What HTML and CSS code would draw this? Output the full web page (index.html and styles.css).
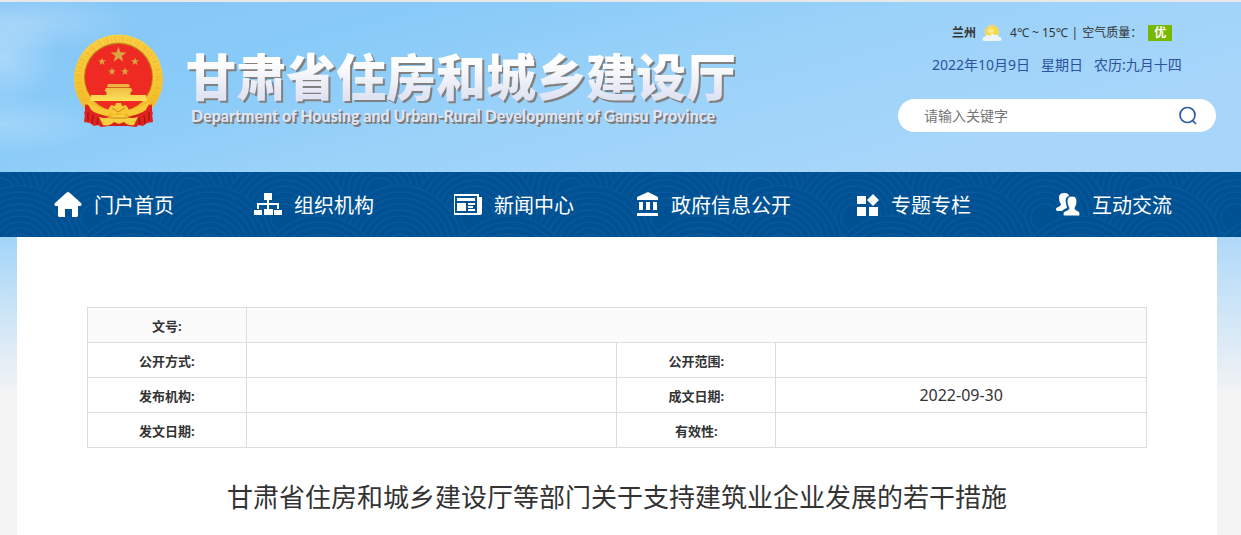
FILE: index.html
```html
<!DOCTYPE html>
<html lang="zh-CN">
<head>
  <meta charset="UTF-8">
  <meta name="viewport" content="width=device-width,initial-scale=1">
  <title>甘肃省住房和城乡建设厅</title>
  <link rel="stylesheet" href="styles.css">
</head>
<body>

  <header class="header">
    <div class="container header-inner">
      <a class="brand" href="#">
        <svg class="emblem" viewBox="0 0 100 104" aria-hidden="true">
          <defs>
            <linearGradient id="gold" x1="0" y1="0" x2="0" y2="1">
              <stop offset="0" stop-color="#fbd044"/>
              <stop offset=".6" stop-color="#f6c430"/>
              <stop offset="1" stop-color="#f2b524"/>
            </linearGradient>
            <linearGradient id="gate" x1="0" y1="0" x2="0" y2="1">
              <stop offset="0" stop-color="#e9b23a"/>
              <stop offset="1" stop-color="#ffe25a"/>
            </linearGradient>
            <path id="star" d="M0-10 2.3-3.2 9.5-3.1 3.8 1.2 5.9 8.1 0 4-5.9 8.1-3.8 1.2-9.5-3.1-2.3-3.2Z"/>
          </defs>
          <circle cx="48.500" cy="49" r="44.500" fill="url(#gold)"/>
          <circle cx="48.500" cy="49" r="40" fill="none" stroke="#e0a126" stroke-width="6" stroke-dasharray="2 3 1 2" opacity=".25"/>
          <circle cx="48.500" cy="47" r="34.500" fill="#c27f1c"/>
          <circle cx="48.500" cy="47.500" r="33.500" fill="#ee2a22"/>
          <g fill="#d9a441">
            <use href="#star" transform="translate(48.500 25) scale(.84)"/>
            <use href="#star" transform="translate(32 31.500) scale(.42)"/>
            <use href="#star" transform="translate(65 31.500) scale(.42)"/>
            <use href="#star" transform="translate(42 41.500) scale(.42)"/>
            <use href="#star" transform="translate(55 41.500) scale(.42)"/>
          </g>
          <path d="M38 54h21l1 3h-23zM36 58h25l1.500 3-2 1v3h15.500l1 6h-57l1-6h15.500v-3l-2-1z" fill="url(#gate)"/>
          <path d="M38 57.500h21" stroke="#c98520" stroke-width=".6"/>
          <path d="M17 74c8 9 20 14 31.500 14s23.500-5 31.500-14l3 10-16 10H30L14 84z" fill="#d9201c"/>
          <path d="M17 71c7 5 13 8 21 9l3-5 4 1 1-3h5l1 3 4-1 3 5c8-1 14-4 21-9l-4 9c-6 4-12 6-17 5l-3-2-3 2-2-2h-5l-2 2-3-2-3 2c-6 0-12-1-17-5z" fill="#f8c936"/>
          <path d="M15 74l8 8 9 5 7 9-8 1-3-2-4 1-4-3-6-1 1-9zM82 74l-8 8-9 5-7 9 8 1 3-2 4 1 4-3 6-1-1-9z" fill="#e1231e"/>
          <path d="M18 82v9m5-6-1 9m6-6-1 7M79 82v9m-5-6 1 9m-6-6 1 7" stroke="#9e1513" stroke-width="1.200" fill="none"/>
          <path d="M38 90h21l3 6H35z" fill="#d9201c"/>
          <path d="M29 87c6 2 11 1 15-2h9c4 3 9 4 15 2l-4 8c-5 1-8-1-10-3l-5 2-5-2c-3 3-6 4-11 3z" fill="#f8cf3e"/>
          <path d="M42 78l6 4 7-4M40 88h17" stroke="#c98520" fill="none"/>
        </svg>
        <span class="brand-text">
          <strong class="brand-cn">甘肃省住房和城乡建设厅</strong>
          <span class="brand-en">Department of Housing and Urban-Rural Development of Gansu Province</span>
        </span>
      </a>

      <div class="tools">
        <div class="weather">
          <b class="city">兰州</b>
          <svg class="weather-icon" width="20" height="18" viewBox="0 0 20 18" aria-hidden="true">
            <circle cx="10" cy="8" r="7.500" fill="#f7d86b" opacity=".75"/>
            <circle cx="10" cy="8" r="5.500" fill="#fbd53a"/>
            <circle cx="9" cy="7" r="3" fill="#fdeb8a"/>
            <path d="M2 17a2 2 0 0 1 1-4 3 3 0 0 1 5-1 3 3 0 0 1 5-1 3 3 0 0 1 4 2 2 2 0 0 1 1 4z" fill="#eef5fb"/>
          </svg>
          <span class="forecast"><span>4℃ ~ 15℃</span><span>|</span><span>空气质量：</span></span>
          <b class="air">优</b>
        </div>
        <div class="date"><span>2022年10月9日</span><span>星期日</span><span>农历:九月十四</span></div>
        <form class="search">
          <input type="text" placeholder="请输入关键字" aria-label="请输入关键字">
          <button type="submit" aria-label="搜索">
            <svg width="20" height="20" viewBox="0 0 20 20" fill="none" stroke="#2c5ba5" stroke-width="1.700">
              <circle cx="9.500" cy="9" r="7.500"/>
              <path d="M14.500 14.500l3.500 3.500"/>
            </svg>
          </button>
        </form>
      </div>
    </div>
  </header>

  <nav class="nav">
    <svg class="nav-pattern" aria-hidden="true">
      <defs>
        <g id="wave" fill="#005193" stroke="#07589a" stroke-width="1.500">
          <circle r="62"/><circle r="56"/><circle r="50"/><circle r="44"/><circle r="38"/>
          <circle r="32"/><circle r="26"/><circle r="20"/><circle r="14"/>
        </g>
        <pattern id="waves" width="190" height="80" patternUnits="userSpaceOnUse">
          <use href="#wave" x="0" y="20"/><use href="#wave" x="190" y="20"/>
          <use href="#wave" x="95" y="46"/>
          <use href="#wave" x="20" y="76"/><use href="#wave" x="210" y="76"/>
          <use href="#wave" x="130" y="106"/>
        </pattern>
      </defs>
      <rect width="100%" height="100%" fill="url(#waves)"/>
    </svg>
    <ul class="container nav-list">
      <li><a href="#">
        <svg width="28" height="26" viewBox="0 0 28 26"><path d="M14 0c1 0 2 1 3 2l10 9c1 1 1 3-1 3h-2v9c0 2-1 2-2 2h-4v-8h-7v8H6c-1 0-2 0-2-2v-9H2c-2 0-2-2-1-3l10-9c1-1 2-2 3-2z"/></svg>
        门户首页</a></li>
      <li><a href="#">
        <svg width="28" height="26" viewBox="0 0 28 26"><path d="M10 1h8v7h-3v3h10v6h-2v-4h-8v4h4v6h-9v-6h3v-4H5v4H3v-6h10V8h-3zM0 18h8v5H0zM20 18h8v5h-8z"/></svg>
        组织机构</a></li>
      <li><a href="#">
        <svg width="28" height="26" viewBox="0 0 28 26"><path fill-rule="evenodd" d="M0 2h25v3h3v16a2 2 0 0 1-2 2H0zM1 4v17h22V4z"/><path d="M3 6h18v3H3zM3 11h9v8H3zM14 11h7v2h-7zM14 14h5v2h-5zM14 17h7v2h-7z"/></svg>
        新闻中心</a></li>
      <li><a href="#">
        <svg width="22" height="26" viewBox="0 0 22 26"><path d="M11 0l10 5v3H0V5zM2 10h4v8H2zM9 10h4v8H9zM16 10h4v8h-4zM0 21h21v3H0z"/></svg>
        政府信息公开</a></li>
      <li><a href="#">
        <svg width="22" height="26" viewBox="0 0 22 26"><path d="M0 4h9v8H0zM16 2l6 6-6 6-6-6zM0 15h9v9H0zM12 15h9v9h-9z"/></svg>
        专题专栏</a></li>
      <li><a href="#">
        <svg width="24" height="26" viewBox="0 0 24 26"><path d="M9 1c2 0 4 1 4 3-3 1-4 4-3 7 0 2 1 3 1 5-3 1-4 2-5 3H2c-2 0-2-1-2-2 0-2 5-2 5-5-1-1-2-3-2-6 0-4 2-5 6-5z"/><path d="M16 4c4 0 5 3 5 6 0 2-1 4-2 6 0 3 5 2 5 6 0 2-1 2-2 2H10c-2 0-3 0-3-2 0-4 6-3 6-6-1-2-2-4-2-6 0-3 1-6 5-6z" stroke="#005193"/></svg>
        互动交流</a></li>
    </ul>
  </nav>

  <div class="page">
    <main class="container content">
      <table class="info">
        <colgroup>
          <col class="col-name"><col class="col-value">
          <col class="col-name"><col class="col-value">
        </colgroup>
        <tr class="first"><th scope="row">文号:</th><td colspan="3"></td></tr>
        <tr><th scope="row">公开方式:</th><td></td><th scope="row">公开范围:</th><td></td></tr>
        <tr><th scope="row">发布机构:</th><td></td><th scope="row">成文日期:</th><td>2022-09-30</td></tr>
        <tr><th scope="row">发文日期:</th><td></td><th scope="row">有效性:</th><td></td></tr>
      </table>
      <h1 class="title">甘肃省住房和城乡建设厅等部门关于支持建筑业企业发展的若干措施</h1>
    </main>
  </div>

</body>
</html>
```
FILE: styles.css
```css
*, *::before, *::after { box-sizing: border-box; }
html { background: #f4f4f4; }
body {
  margin: 0;
  min-height: 100vh;
  display: flex;
  flex-direction: column;
  border-top: 2px solid #e8e8e8;
  font-family: "Noto Sans", "Noto Sans CJK SC", sans-serif;
  font-size: 14px;
  color: #333;
  /* sky, fading to grey below the menu */
  background:
    linear-gradient(to bottom, rgba(244,244,244,0) 220px, rgba(244,244,244,.4) 290px, #f4f4f4 395px),
    radial-gradient(ellipse 110px 30px at 30px 20px, rgba(255,255,255,.22), transparent),
    radial-gradient(ellipse 60px 50px at 0 55px, rgba(255,255,255,.3), transparent),
    radial-gradient(ellipse 110px 30px at 0 122px, rgba(255,255,255,.22), transparent),
    linear-gradient(165deg, #86c6f6 0, #88caf8 120px, #9ad2f9 240px, #a8d6fa 400px);
}
a { color: inherit; text-decoration: none; }
.container {
  width: 100%;
  max-width: 1200px;
  margin: 0 auto;
}
.header, .nav, .page { padding: 0 24px 0 17px; }

/* Header */
.header-inner {
  display: flex;
  justify-content: space-between;
  align-items: flex-start;
}
.brand {
  display: flex;
  gap: 16px;
  padding: 28px 0 38px 53px;
}
.emblem { width: 100px; height: 104px; flex: none; }
.brand-text {
  display: flex;
  flex-direction: column;
  padding-top: 14px;
  font-family: "Noto Sans CJK SC", sans-serif;
  font-weight: 700;
  white-space: nowrap;
}
.brand-cn {
  font-size: 50px;
  line-height: 60px;
  color: transparent;
  background: linear-gradient(#fff 30%, #dfe3f2 90%);
  -webkit-background-clip: text;
  background-clip: text;
  filter: drop-shadow(2px 2px 0 #808080);
}
.brand-en {
  padding: 3px 0 0 5px;
  font-family: Lato, sans-serif;
  font-size: 16px;
  font-weight: 900;
  line-height: 18px;
  color: #dfe5f5;
  text-shadow: 1px 1px 0 #777, 2px 2px 0 #858585;
}
.tools {
  display: flex;
  flex-direction: column;
  width: 318px;
  margin-right: 1px;
  padding-top: 20px;
}
.weather {
  display: flex;
  align-items: center;
  gap: 8px;
  padding-left: 54px;
  font-size: 12px;
  line-height: 22px;
  white-space: nowrap;
}
.weather-icon { margin-left: -2px; }
.forecast { display: flex; gap: 4px; }
.air {
  margin-left: -2px;
  padding: 0 6px;
  line-height: 16px;
  color: #fff;
  background: #7ab800;
}
.date {
  display: flex;
  gap: 11px;
  padding: 10px 0 0 34px;
  line-height: 22px;
  color: #2d519b;
  white-space: nowrap;
}
.search {
  display: flex;
  align-items: center;
  height: 33px;
  margin-top: 23px;
  padding: 0 18px 0 26px;
  border-radius: 17px;
  background: #fff;
}
.search input {
  flex: 1;
  min-width: 0;
  padding: 0;
  border: 0;
  outline: 0;
  background: none;
  font: inherit;
}
.search input::placeholder { color: #757575; }
.search button {
  display: flex;
  padding: 0;
  border: 0;
  background: none;
  cursor: pointer;
}

/* Menu */
.nav {
  position: relative;
  background: #005193;
}
.nav-pattern {
  position: absolute;
  inset: 0;
  width: 100%;
  height: 100%;
}
.nav-list {
  position: relative;
  display: grid;
  grid-template-columns: repeat(6, 1fr);
  padding: 0;
  list-style: none;
}
.nav-list a {
  display: flex;
  align-items: center;
  justify-content: center;
  gap: 12px;
  height: 65px;
  padding-right: 6px;
  font-size: 20px;
  color: #fff;
  white-space: nowrap;
}
.nav-list svg { fill: #fff; }

/* Document */
.page {
  flex: 1;
  display: flex;
}
.content {
  padding: 70px 70px 20px;
  background: #fff;
}
.info {
  width: 100%;
  table-layout: fixed;
  border-collapse: collapse;
  text-align: center;
}
.info .col-name { width: 15%; }
.info .col-value { width: 35%; }
.info th, .info td {
  height: 35px;
  padding: 0;
  border: 1px solid #ddd;
}
.info th { font-size: 13px; }
.info td { font-size: 16px; line-height: 24px; }
.info .first { background: #fbfbfb; }
.title {
  margin: 29px 0 0;
  font-size: 26px;
  font-weight: 400;
  line-height: 40px;
  text-align: center;
}
```
